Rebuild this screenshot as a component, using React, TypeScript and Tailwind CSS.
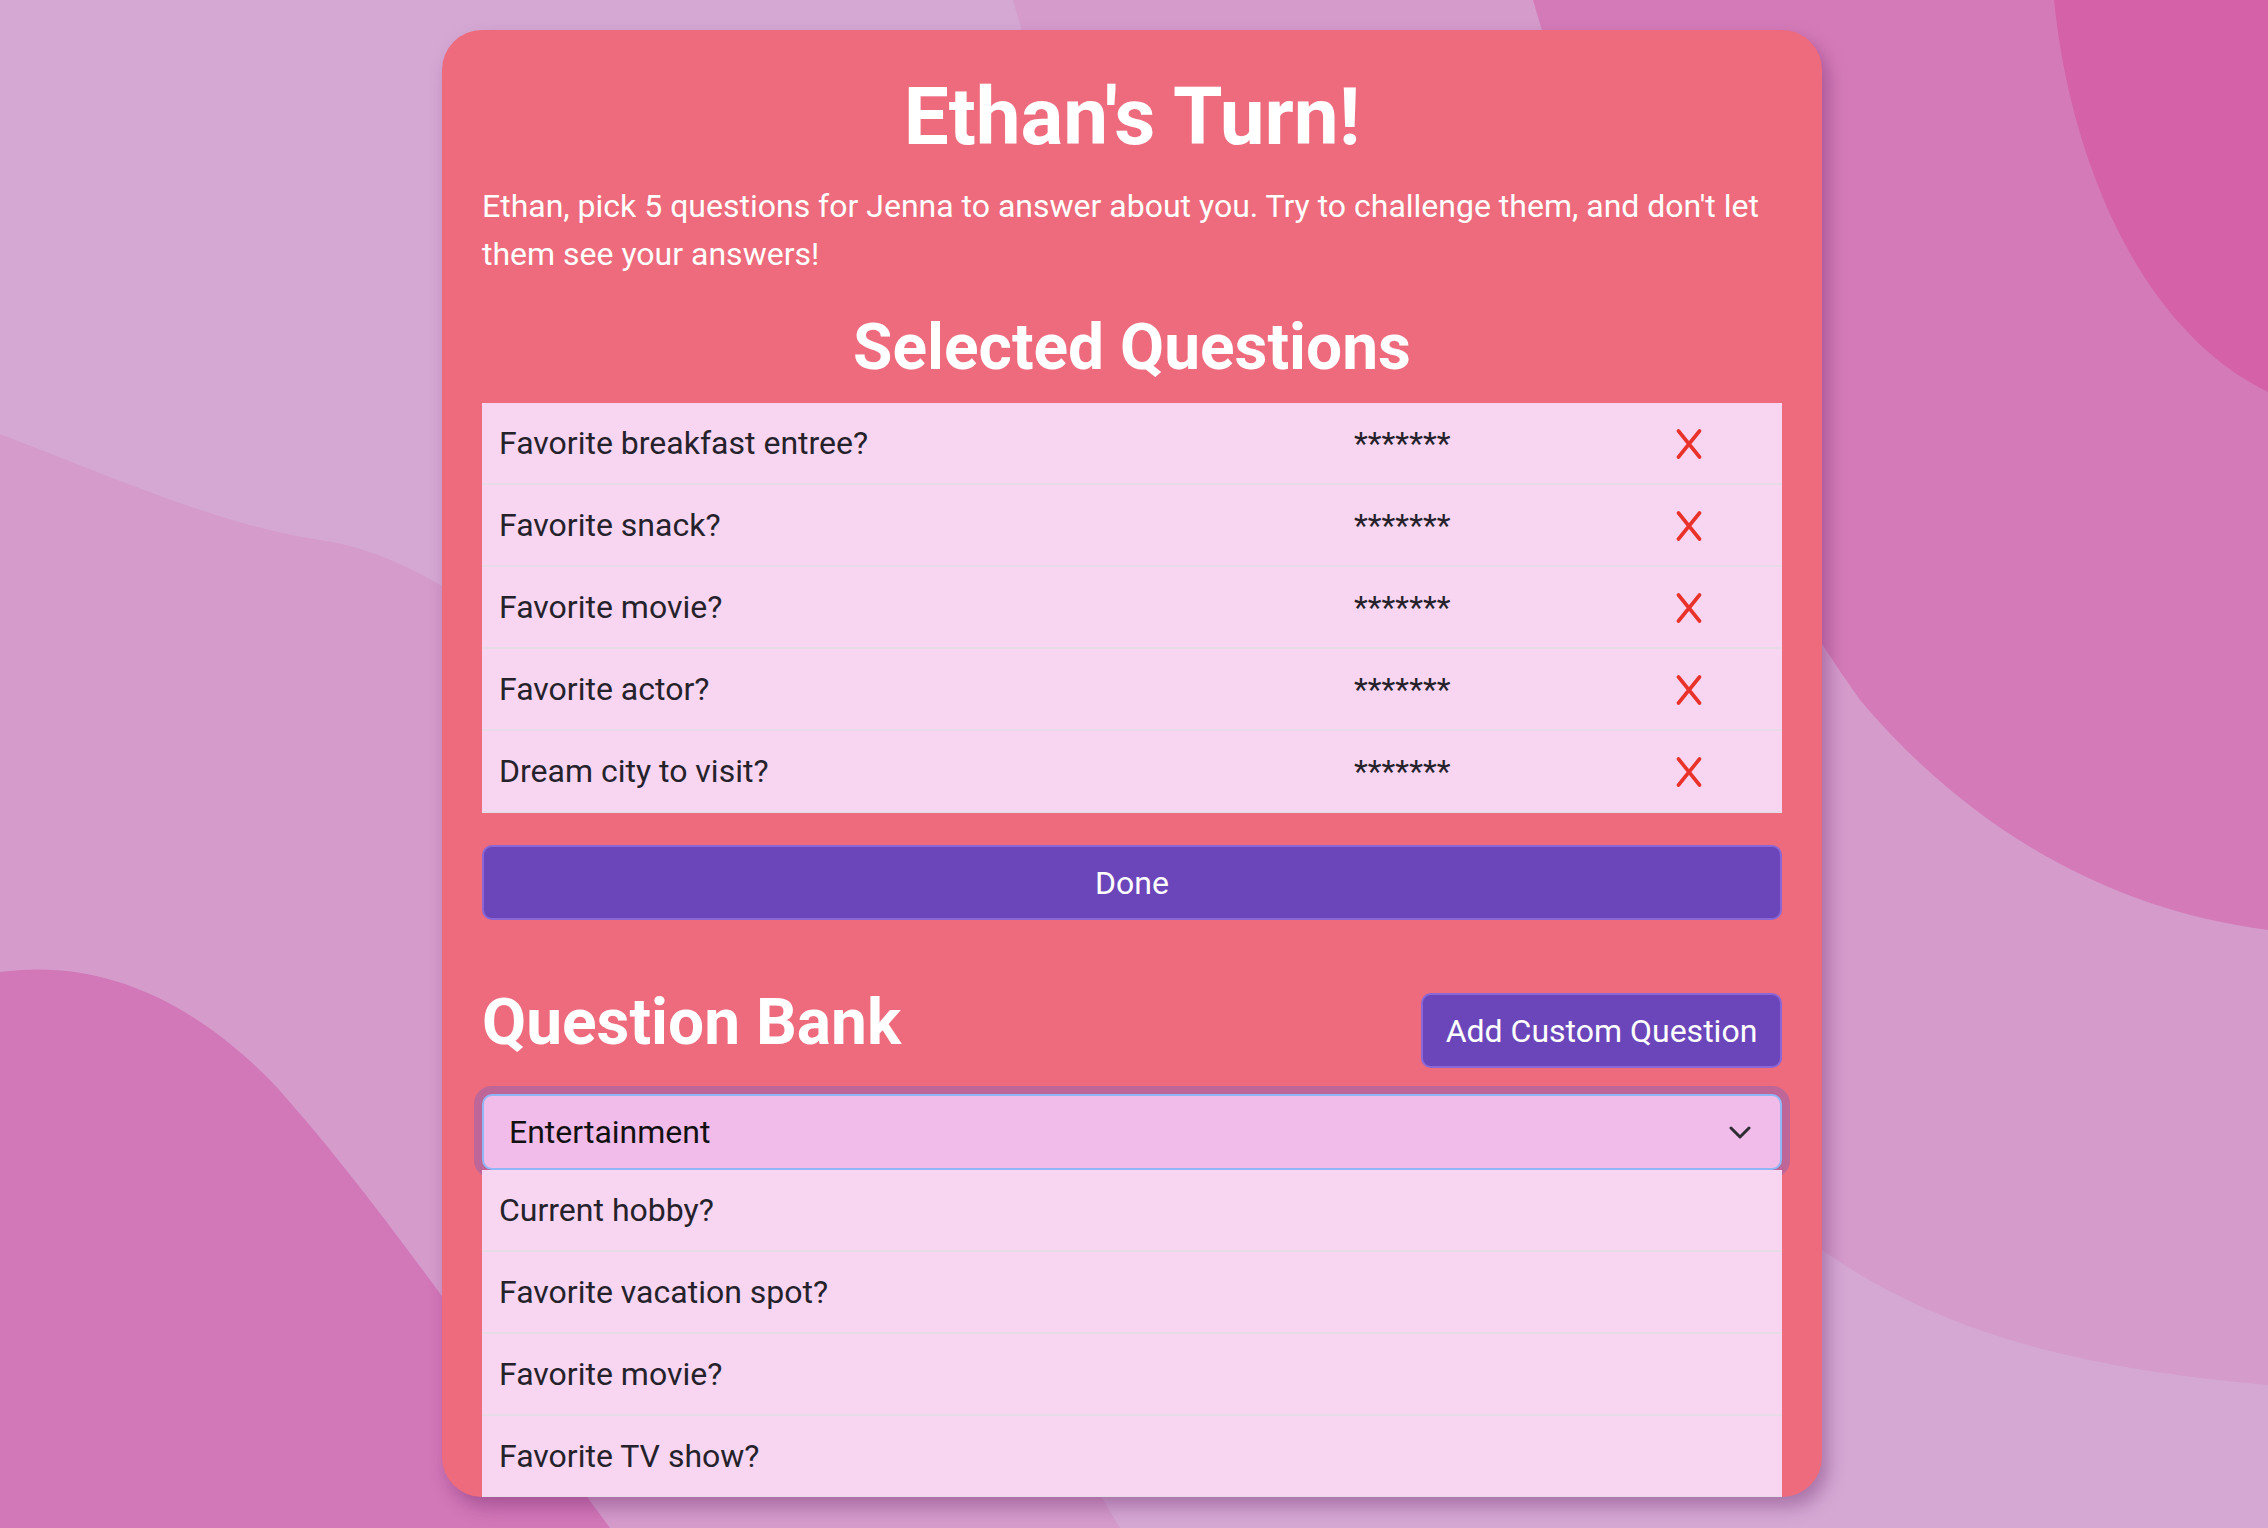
import React from "react";

const selected = [
  "Favorite breakfast entree?",
  "Favorite snack?",
  "Favorite movie?",
  "Favorite actor?",
  "Dream city to visit?",
];

const bank = [
  "Current hobby?",
  "Favorite vacation spot?",
  "Favorite movie?",
  "Favorite TV show?",
];

function RedX() {
  return (
    <svg width="26" height="30" viewBox="0 0 26 30" fill="none">
      <path d="M2.5 2 L23.5 28 M23.5 2 L2.5 28" stroke="#e8322a" strokeWidth="3.6" strokeLinecap="round" />
    </svg>
  );
}

function Background() {
  return (
    <svg
      className="absolute inset-0 h-full w-full"
      viewBox="0 0 2268 1528"
      preserveAspectRatio="none"
    >
      <rect width="2268" height="1528" fill="#d5a8d4" />
      <path d="M1013 0 C1150 500 1600 900 1822 1250 C1950 1340 2100 1370 2268 1385 L2268 0 Z" fill="#d49bcb" />
      <path d="M1533 0 C1620 300 1760 560 1860 700 C1970 830 2110 910 2268 930 L2268 0 Z" fill="#d47ab8" />
      <path d="M2054 0 C2070 160 2140 330 2268 392 L2268 0 Z" fill="#d562a8" />
      <path d="M0 434 C120 480 220 525 320 540 C460 560 600 700 760 900 C900 1100 1000 1330 1120 1528 L0 1528 Z" fill="#d49bcb" />
      <path d="M0 972 C90 960 180 990 270 1080 C380 1200 500 1380 610 1528 L0 1528 Z" fill="#d277b8" />
    </svg>
  );
}

function Row({ text, answer }: { text: string; answer?: boolean }) {
  return (
    <div className="grid h-[82px] grid-cols-[872px_322px_1fr] items-center border-b-2 border-[#e6dbe6] bg-[#f8d6f2] text-[32px] leading-[40px] text-[#25222b]">
      <div className="pl-[17px]">{text}</div>
      {answer ? (
        <>
          <div>*******</div>
          <div className="flex items-center pt-[2px]">
            <RedX />
          </div>
        </>
      ) : null}
    </div>
  );
}

export default function App() {
  return (
    <div
      className="relative h-screen w-full overflow-hidden"
      style={{ fontFamily: "Roboto, 'Noto Sans', Arial, sans-serif" }}
    >
      <Background />
      <div className="relative flex justify-center pr-[4px] pt-[30px]">
        <div className="h-[1467px] w-[1380px] overflow-hidden rounded-[40px] bg-[#ed6b7c] px-[40px] pt-[40px] shadow-[6px_10px_18px_rgba(90,20,90,0.35)]">
          <h1 className="text-center text-[80px] font-bold leading-[94px] text-white">
            Ethan's Turn!
          </h1>
          <p className="mt-[18px] text-[32px] leading-[48px] text-white">
            Ethan, pick 5 questions for Jenna to answer about you. Try to challenge them, and don't let them see your answers!
          </p>
          <h2 className="mt-[32px] text-center text-[64px] font-bold leading-[75px] text-white">
            Selected Questions
          </h2>
          <div className="mt-[18px]">
            {selected.map((q) => (
              <Row key={q} text={q} answer />
            ))}
          </div>
          <button className="mt-[32px] flex h-[75px] w-full items-center justify-center rounded-[10px] border-2 border-[#8a67d4] bg-[#6b46ba] text-[32px] text-white">
            Done
          </button>
          <div className="mt-[65px] flex items-center justify-between">
            <h2 className="mb-[16px] text-[64px] font-bold leading-[75px] text-white">
              Question Bank
            </h2>
            <button className="flex h-[75px] w-[361px] items-center justify-center rounded-[10px] border-2 border-[#8a67d4] bg-[#6b46ba] text-[32px] text-white">
              Add Custom Question
            </button>
          </div>
          <div className="mt-[18px] flex h-[76px] items-center justify-between rounded-[10px] border-2 border-[#8fb6f6] bg-[#f1bbea] pl-[25px] pr-[29px] text-[32px] text-[#111] shadow-[0_0_0_8px_rgba(120,95,195,0.4)]">
            <span>Entertainment</span>
            <svg width="22" height="13" viewBox="0 0 22 13" fill="none">
              <path d="M2 2 L11 11 L20 2" stroke="#2d2d33" strokeWidth="3" strokeLinecap="round" strokeLinejoin="round" />
            </svg>
          </div>
          <div>
            {bank.map((q) => (
              <Row key={q} text={q} />
            ))}
          </div>
        </div>
      </div>
    </div>
  );
}
